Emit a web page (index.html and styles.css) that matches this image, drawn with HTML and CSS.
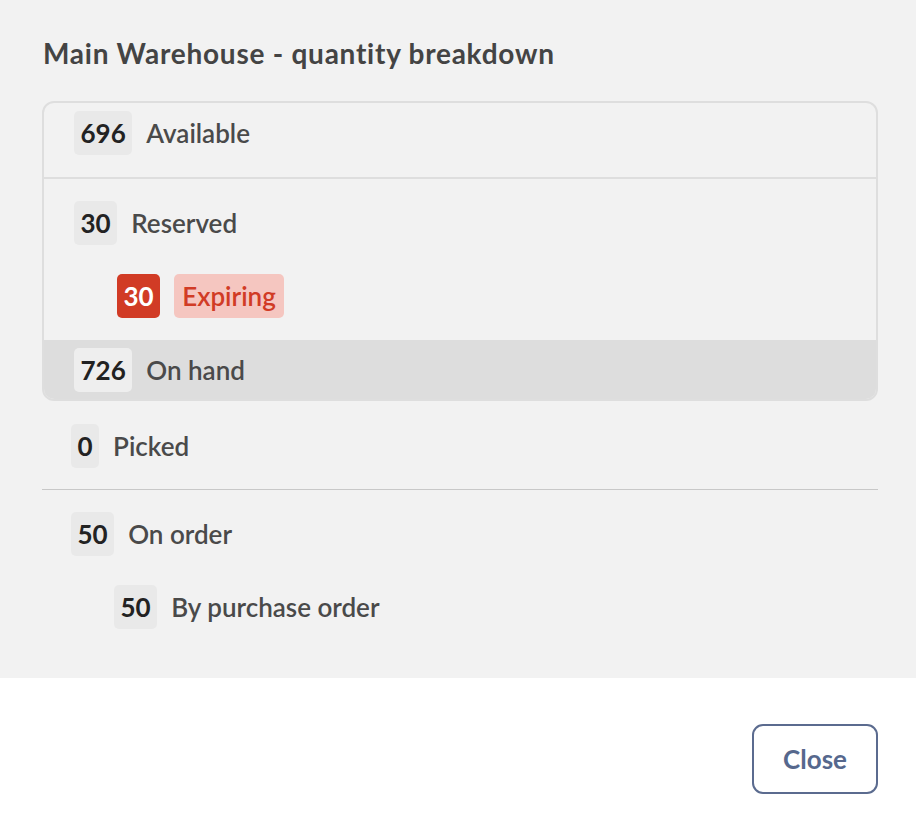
FILE: index.html
```html
<!DOCTYPE html>
<html lang="en">
<head>
  <meta charset="UTF-8" />
  <meta name="viewport" content="width=device-width, initial-scale=1.0"/>
  <title>Quantity breakdown</title>
  <link rel="stylesheet" href="styles.css">
</head>
<body>
  <div class="dialog">
    <div class="dialog-body">
      <h1>Main Warehouse - quantity breakdown</h1>

      <div class="stock-box">
        <div class="stock-row row-available">
          <span class="qty">696</span>
          <span class="label">Available</span>
        </div>

        <div class="stock-section">
          <div class="stock-row">
            <span class="qty">30</span>
            <span class="label">Reserved</span>
          </div>
          <div class="stock-row sub-row">
            <span class="qty qty-danger">30</span>
            <span class="label label-danger">Expiring</span>
          </div>
        </div>

        <div class="stock-row row-total">
          <span class="qty">726</span>
          <span class="label">On hand</span>
        </div>
      </div>

      <div class="stock-row row-outer row-picked">
        <span class="qty">0</span>
        <span class="label">Picked</span>
      </div>

      <hr class="divider">

      <div class="stock-row row-outer">
        <span class="qty">50</span>
        <span class="label">On order</span>
      </div>
      <div class="stock-row row-outer sub-row">
        <span class="qty">50</span>
        <span class="label">By purchase order</span>
      </div>
    </div>

    <div class="dialog-footer">
      <button type="button" class="btn-close">Close</button>
    </div>
  </div>
</body>
</html>
```

FILE: styles.css
```css
body {
  font-family: Lato, 'Open Sans', sans-serif;
  margin: 0;
  padding: 0;
  background-color: #fff;
  color: #4a4a4a;
}

.dialog-body {
  background-color: #f2f2f2;
  padding: 36px 38px 49px 42px;
}

h1 {
  margin: 0 0 31px 1px;
  font-size: 28px;
  font-weight: 700;
  line-height: 34px;
  letter-spacing: 0.75px;
  color: #444;
}

.stock-box {
  border: 2px solid #dedede;
  border-radius: 12px;
  overflow: hidden;
}

.stock-row {
  display: flex;
  align-items: center;
  gap: 14px;
}

.qty {
  padding: 8px 6.5px;
  line-height: 28px;
  font-size: 26px;
  font-weight: 700;
  color: #222;
  background-color: #e9e9e9;
  border-radius: 5px;
}

.label {
  font-size: 26px;
  font-weight: 600;
  line-height: 28px;
}

.row-available {
  padding: 8px 30px 22px;
  border-bottom: 2px solid #dedede;
}

.stock-section {
  padding: 22px 30px 22px;
}

.stock-section .sub-row {
  margin-top: 29px;
}

.sub-row {
  padding-left: 43px;
}

.qty-danger {
  color: #fff;
  background-color: #d13b25;
}

.label-danger {
  padding: 8px;
  color: #d13b25;
  background-color: #f5c6c0;
  border-radius: 5px;
}

.row-total {
  padding: 8px 30px 7px;
  background-color: #dddddd;
}

.row-total .qty {
  background-color: #eeeeee;
}

.row-outer {
  padding-left: 29px;
}

.row-picked {
  margin-top: 23px;
}

.divider {
  margin: 21px 0 22px;
  border: none;
  border-top: 1px solid #c8c8c8;
}

.row-outer.sub-row {
  margin-top: 29px;
  padding-left: 72px;
}

.dialog-footer {
  display: flex;
  justify-content: flex-end;
  padding: 46px 38px 40px;
}

.btn-close {
  width: 126px;
  height: 70px;
  font-family: Lato, sans-serif;
  font-size: 26px;
  font-weight: 700;
  color: #56688d;
  background-color: #fff;
  border: 2px solid #5b6b8f;
  border-radius: 11px;
  cursor: pointer;
}
```
